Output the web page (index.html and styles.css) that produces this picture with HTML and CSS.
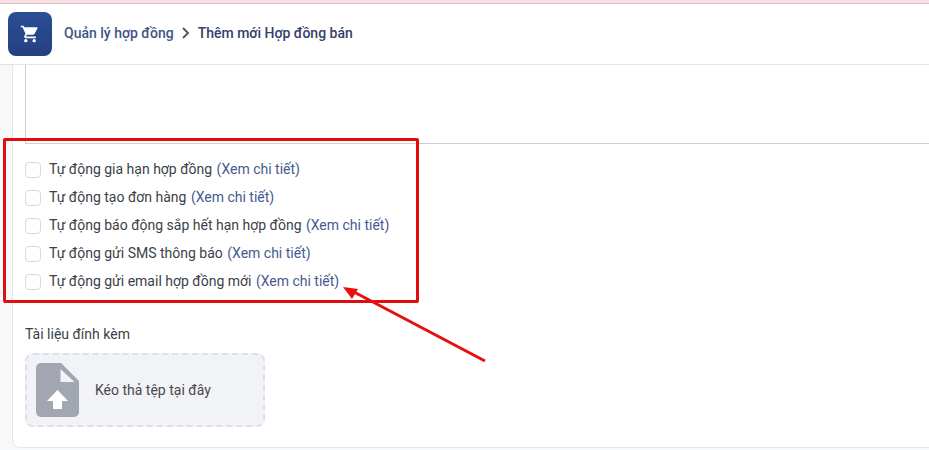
FILE: index.html
```html
<!DOCTYPE html>
<html>
<head>
	<meta charset="utf-8">
	<title>Thêm mới Hợp đồng bán</title>
	<link rel="stylesheet" href="styles.css">
</head>
<body>
	<div class="top-strip"></div>
	<header class="page-header">
		<div class="logo-box">
			<svg width="20" height="20" viewBox="0 0 24 24"><path fill="#fff" d="M7 18c-1.1 0-1.99.9-1.99 2S5.900 22 7 22s2-.9 2-2-.9-2-2-2zM1 2v2h2l3.600 7.590-1.350 2.450c-.16.280-.25.610-.25.960 0 1.100.9 2 2 2h12v-2H7.420c-.14 0-.25-.11-.25-.25l.03-.12.9-1.630h7.450c.75 0 1.410-.41 1.750-1.030l3.580-6.490A1 1 0 0 0 20 4H5.210l-.94-2H1zm16 16c-1.100 0-1.990.9-1.990 2s.89 2 1.990 2 2-.9 2-2-.9-2-2-2z"/></svg>
		</div>
		<nav class="crumbs">
			<span class="crumb-parent">Quản lý hợp đồng</span>
			<svg class="crumb-sep" width="10" height="12" viewBox="0 0 10 12"><path fill="none" stroke="#555b66" stroke-width="2" d="M2 1l5 5-5 5"/></svg>
			<span class="crumb-current">Thêm mới Hợp đồng bán</span>
		</nav>
	</header>

	<main class="page-body">
		<section class="form-card">
			<div class="text-box"></div>

			<ul class="option-list">
				<li class="option-row"><span class="check-box"></span>Tự động gia hạn hợp đồng <a class="detail-link">(Xem chi tiết)</a></li>
				<li class="option-row"><span class="check-box"></span>Tự động tạo đơn hàng <a class="detail-link">(Xem chi tiết)</a></li>
				<li class="option-row"><span class="check-box"></span>Tự động báo động sắp hết hạn hợp đồng <a class="detail-link">(Xem chi tiết)</a></li>
				<li class="option-row"><span class="check-box"></span>Tự động gửi SMS thông báo <a class="detail-link">(Xem chi tiết)</a></li>
				<li class="option-row"><span class="check-box"></span>Tự động gửi email hợp đồng mới <a class="detail-link">(Xem chi tiết)</a></li>
			</ul>

			<div class="attach-label">Tài liệu đính kèm</div>
			<div class="drop-zone">
				<svg class="file-icon" width="43" height="54" viewBox="0 0 43 54">
					<path fill="#a1a6b0" d="M5 0H25L43 18V49a5 5 0 0 1-5 5H5a5 5 0 0 1-5-5V5a5 5 0 0 1 5-5z"/>
					<path fill="#f2f3f6" d="M24.500 6L38.500 19H24.500z"/>
					<path fill="#fff" d="M21.500 27L32 38H26V46H17V38H11z"/>
				</svg>
				<span class="drop-text">Kéo thả tệp tại đây</span>
			</div>
		</section>
	</main>

	<div class="mark-box"></div>
	<svg class="mark-arrow" width="929" height="450" viewBox="0 0 929 450">
		<path fill="none" stroke="#e60f0f" stroke-width="3" d="M485 361L354 292"/>
		<path fill="#e60f0f" d="M343 287L358 289L352 299z"/>
	</svg>
</body>
</html>
```
FILE: styles.css
```css
html,
body {
	margin: 0;
	height: 450px;
	overflow: hidden;
	background-color: #ffffff;
	font-family: Roboto, "Liberation Sans", sans-serif;
	font-size: 14px;
	color: #3a3f4b;
}

.top-strip {
	height: 3px;
	background-color: #fddde2;
	border-bottom: 1px solid #c9c5c8;
}

.page-header {
	display: flex;
	align-items: center;
	height: 60px;
	padding-left: 8px;
	background-color: #ffffff;
	border-bottom: 1px solid #e4e4e4;
}

.logo-box {
	display: flex;
	align-items: center;
	justify-content: center;
	width: 44px;
	height: 44px;
	border-radius: 8px;
	background: linear-gradient(#2a4f96, #253f80);
}

.crumbs {
	display: flex;
	align-items: center;
	margin-left: 12px;
	margin-top: -2px;
	font-weight: 500;
}

.crumb-parent {
	color: #3f5587;
}

.crumb-sep {
	margin: 0 7px;
}

.crumb-current {
	color: #35406b;
}

.page-body {
	height: 385px;
	padding-left: 12px;
	background-color: #f7f8fa;
}

.form-card {
	box-sizing: border-box;
	height: 383px;
	padding-left: 12px;
	background-color: #ffffff;
	border: 1px solid #e4e6ea;
	border-top: 0;
	border-right: 0;
	border-bottom-left-radius: 8px;
}

.text-box {
	height: 78px;
	border-left: 1px solid #cfcfcf;
	border-bottom: 1px solid #cfcfcf;
}

.option-list {
	margin: 11px 0 0;
	padding: 0;
	list-style: none;
}

.option-row {
	display: flex;
	align-items: center;
	height: 28px;
	white-space: pre;
}

.check-box {
	box-sizing: border-box;
	width: 16px;
	height: 16px;
	margin: 1px 8px 0 0;
	border: 1px solid #d6d8dc;
	border-radius: 4px;
	background-color: #ffffff;
}

.detail-link {
	margin-left: 1px;
	color: #46598f;
}

.attach-label {
	margin-top: 29px;
	line-height: 20px;
	color: #3a3f4b;
}

.drop-zone {
	box-sizing: border-box;
	display: flex;
	align-items: center;
	width: 240px;
	height: 74px;
	margin-top: 9px;
	padding-left: 9px;
	background-color: #f2f3f6;
	border: 2px dashed #dde0ea;
	border-radius: 8px;
}

.drop-text {
	margin-left: 16px;
	color: #4a4650;
}

.mark-box {
	position: absolute;
	left: 3px;
	top: 138px;
	box-sizing: border-box;
	width: 416px;
	height: 165px;
	border: 3px solid #e00d0d;
	border-radius: 2px;
}

.mark-arrow {
	position: absolute;
	left: 0;
	top: 0;
}
```
